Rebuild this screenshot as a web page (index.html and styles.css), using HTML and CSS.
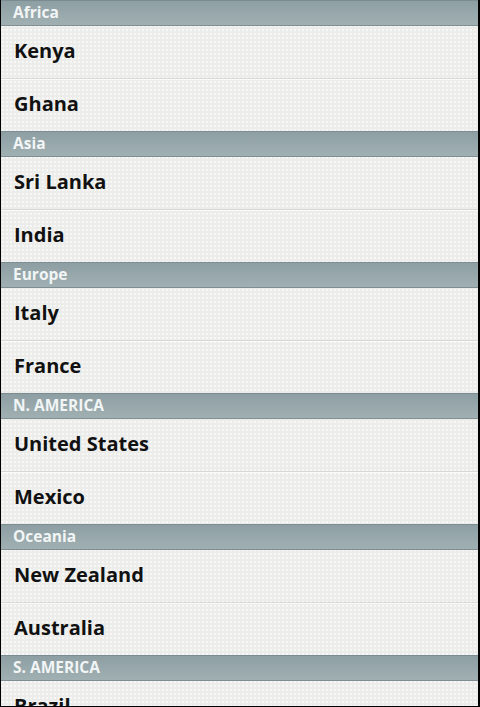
FILE: index.html
```html
<!DOCTYPE html>
<html lang="en">
<head>
    <meta charset="UTF-8">
    <meta name="viewport" content="width=device-width, initial-scale=1.0">
    <title>Countries</title>
    <link rel="stylesheet" href="styles.css">
</head>
<body>

<div class="list">
    <div class="section">Africa</div>
    <div class="item">Kenya</div>
    <div class="item last">Ghana</div>

    <div class="section">Asia</div>
    <div class="item">Sri Lanka</div>
    <div class="item last">India</div>

    <div class="section">Europe</div>
    <div class="item">Italy</div>
    <div class="item last">France</div>

    <div class="section">N. AMERICA</div>
    <div class="item">United States</div>
    <div class="item last">Mexico</div>

    <div class="section">Oceania</div>
    <div class="item">New Zealand</div>
    <div class="item last">Australia</div>

    <div class="section">S. AMERICA</div>
    <div class="item">Brazil</div>
    <div class="item last">Argentina</div>
</div>

</body>
</html>
```

FILE: styles.css
```css
html, body {
    margin: 0;
    height: 100%;
    overflow: hidden;
    background: #000;
}
body {
    font-family: "Open Sans", "DejaVu Sans", sans-serif;
}
.list {
    box-sizing: border-box;
    height: 707px;
    overflow: hidden;
    border-left: 1px solid #000;
    border-right: 2px solid #000;
    border-bottom: 1px solid #000;
    background-color: #ecedeb;
    background-image:
        radial-gradient(circle, #f7f8f6 1px, transparent 1.5px);
    background-size: 4px 4px;
}
.section {
    height: 24px;
    line-height: 23px;
    padding-left: 12px;
    color: #f2f5f5;
    font-size: 15.5px;
    font-weight: bold;
    border-top: 1px solid #7b8c92;
    border-bottom: 1px solid #7e8e93;
    background: linear-gradient(#8e9fa4, #a0b0b2);
}
.item {
    height: 52px;
    line-height: 50px;
    padding-left: 13px;
    color: #111;
    font-size: 20px;
    font-weight: bold;
    border-bottom: 1px solid #d6d8d6;
    box-shadow: 0 1px 0 #fbfbfb;
}
.item.last {
    border-bottom: none;
    box-shadow: none;
}
```
